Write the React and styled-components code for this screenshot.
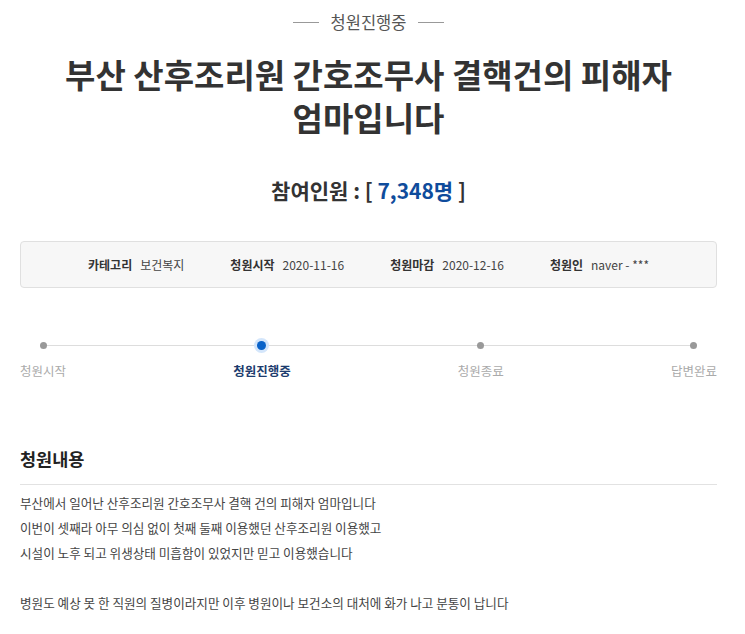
import styled, { createGlobalStyle } from 'styled-components';

const GlobalStyle = createGlobalStyle`
  body {
    margin: 0;
    background: #fff;
    font-family: 'Noto Sans CJK KR', 'Noto Sans', sans-serif;
    color: #333;
  }
`;

const Page = styled.div`
  padding: 0 28px 0 20px;
`;

const Status = styled.div`
  display: flex;
  align-items: center;
  justify-content: center;
  gap: 12px;
  height: 44px;
  font-size: 16.5px;
  color: #555;

  &::before,
  &::after {
    content: '';
    width: 26px;
    height: 1px;
    background: #999;
  }
`;

const Title = styled.h1`
  margin: 9px 0 0;
  text-align: center;
  font-size: 33px;
  line-height: 43px;
  font-weight: 700;
  color: #333;
`;

const Count = styled.div`
  margin-top: 36px;
  text-align: center;
  font-size: 21px;
  line-height: 30px;
  font-weight: 700;
  color: #333;

  em {
    font-style: normal;
    color: #0f4c9c;
  }
`;

const InfoBox = styled.ul`
  list-style: none;
  margin: 36px 0 0;
  padding: 0;
  height: 45px;
  display: flex;
  align-items: center;
  justify-content: center;
  gap: 46px;
  background: #f7f7f7;
  border: 1px solid #e0e0e0;
  border-radius: 4px;
  font-size: 12px;
  color: #444;
`;

const InfoItem = styled.li`
  display: flex;
  gap: 8px;

  strong {
    font-weight: 700;
    color: #333;
  }
`;

const Steps = styled.ol`
  list-style: none;
  margin: 50px 0 0;
  padding: 0;
  display: flex;
  justify-content: space-between;
  position: relative;

  &::before {
    content: '';
    position: absolute;
    left: 23px;
    right: 23px;
    top: 7px;
    height: 1px;
    background: #ddd;
  }
`;

const Step = styled.li`
  display: flex;
  flex-direction: column;
  align-items: center;
  gap: 9px;
  font-size: 12.5px;
  line-height: 18px;
  color: ${({ active }) => (active ? '#1d3c6e' : '#aaa')};
  font-weight: ${({ active }) => (active ? 700 : 400)};
  position: relative;
`;

const Dot = styled.span`
  width: 15px;
  height: 15px;
  border-radius: 50%;
  display: flex;
  align-items: center;
  justify-content: center;
  background: ${({ active }) => (active ? '#d4e6fb' : 'transparent')};

  &::after {
    content: '';
    width: ${({ active }) => (active ? 9 : 7)}px;
    height: ${({ active }) => (active ? 9 : 7)}px;
    border-radius: 50%;
    background: ${({ active }) => (active ? '#0a63c9' : '#999')};
  }
`;

const Section = styled.section`
  margin-top: 66px;
`;

const SectionTitle = styled.h2`
  margin: 0;
  padding-bottom: 12px;
  border-bottom: 1px solid #e2e2e2;
  font-size: 17.5px;
  line-height: 26px;
  font-weight: 700;
  color: #222;
`;

const Body = styled.div`
  padding-top: 5px;
  font-size: 12.6px;
  line-height: 25px;
  color: #444;

  p {
    margin: 0;
    min-height: 25px;
  }
`;

const steps = ['청원시작', '청원진행중', '청원종료', '답변완료'];

const lines = [
  '부산에서 일어난 산후조리원 간호조무사 결핵 건의 피해자 엄마입니다',
  '이번이 셋째라 아무 의심 없이 첫째 둘째 이용했던 산후조리원 이용했고',
  '시설이 노후 되고 위생상태 미흡함이 있었지만 믿고 이용했습니다',
  '',
  '병원도 예상 못 한 직원의 질병이라지만 이후 병원이나 보건소의 대처에 화가 나고 분통이 납니다',
];

export default function App() {
  return (
    <Page>
      <GlobalStyle />
      <Status>청원진행중</Status>
      <Title>
        부산 산후조리원 간호조무사 결핵건의 피해자
        <br />
        엄마입니다
      </Title>
      <Count>
        참여인원 : [ <em>7,348명</em> ]
      </Count>
      <InfoBox>
        <InfoItem><strong>카테고리</strong>보건복지</InfoItem>
        <InfoItem><strong>청원시작</strong>2020-11-16</InfoItem>
        <InfoItem><strong>청원마감</strong>2020-12-16</InfoItem>
        <InfoItem><strong>청원인</strong>naver - ***</InfoItem>
      </InfoBox>
      <Steps>
        {steps.map((s, i) => (
          <Step key={s} active={i === 1}>
            <Dot active={i === 1} />
            {s}
          </Step>
        ))}
      </Steps>
      <Section>
        <SectionTitle>청원내용</SectionTitle>
        <Body>
          {lines.map((l, i) => (
            <p key={i}>{l}</p>
          ))}
        </Body>
      </Section>
    </Page>
  );
}
